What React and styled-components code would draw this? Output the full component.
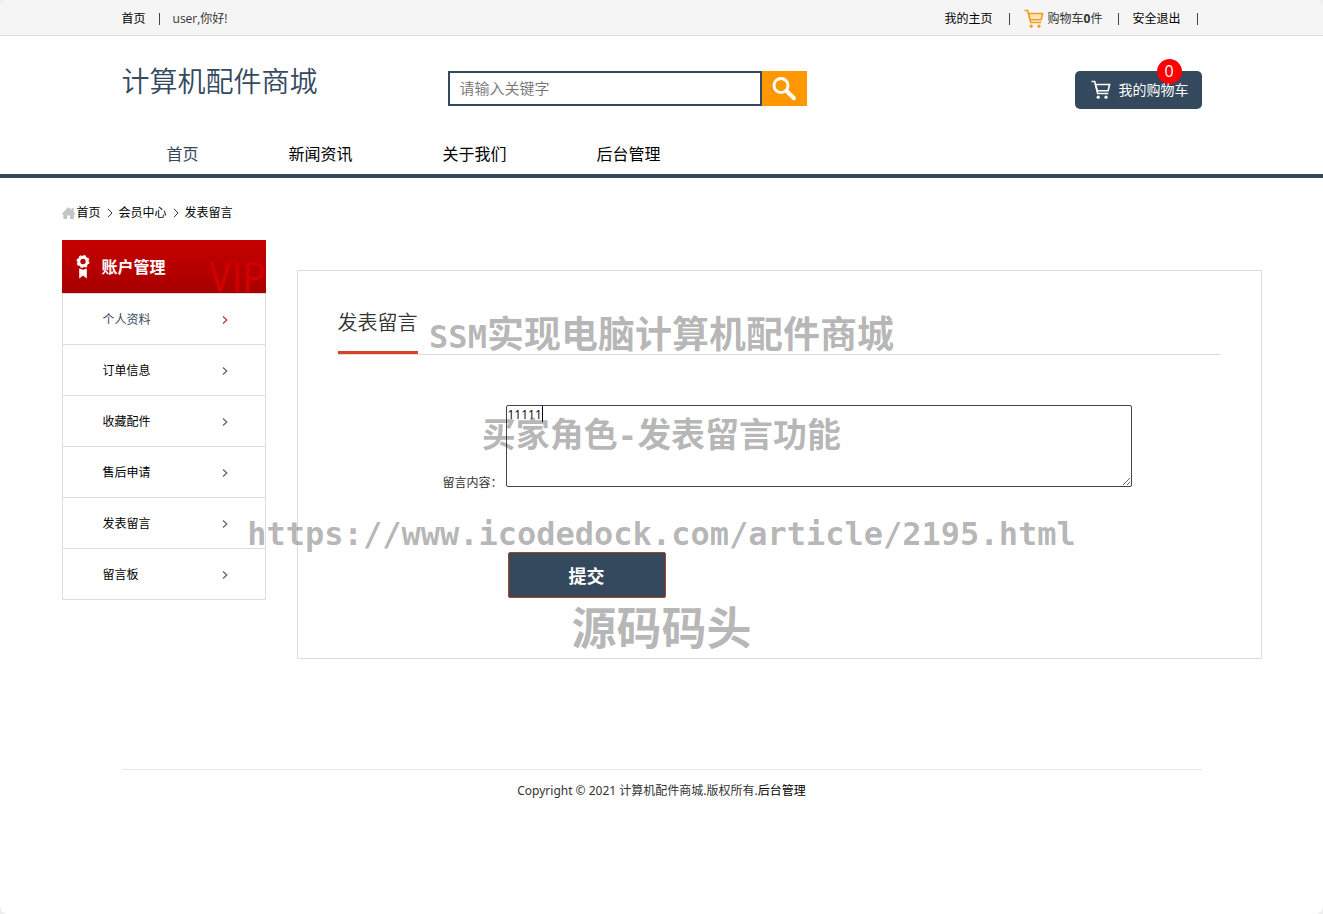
import { useState } from "react";
import styled, { createGlobalStyle } from "styled-components";

const NAV = ["首页", "新闻资讯", "关于我们", "后台管理"];
const MENU = ["个人资料", "订单信息", "收藏配件", "售后申请", "发表留言", "留言板"];
const CRUMBS = ["首页", "会员中心", "发表留言"];

const GlobalStyle = createGlobalStyle`
  * {
    box-sizing: border-box;
  }
  body {
    margin: 0;
    background: #eee;
    color: #333;
    font: 12px/20px "Open Sans", "Noto Sans CJK SC", sans-serif;
  }
  svg {
    display: block;
    flex: none;
  }
`;

const Page = styled.div`
  position: relative;
  min-height: 100vh;
  overflow: hidden;
  border-radius: 8px;
  background: #fff;
`;

const Link = styled.a`
  color: #000;
  text-decoration: none;
  white-space: nowrap;
  &:hover{
    color: #34495e;
  }
`;

const TopBar = styled.div`
  background: #f5f5f5;
  border-bottom: 1px solid #ddd;
`;

const TopInner = styled.div`
  display: flex;
  align-items: center;
  max-width: 1080px;
  height: 35px;
  margin: 0 auto;
  padding-top: 2px;
`;

const TopRight = styled.div`
  display: flex;
  align-items: center;
  margin-left: auto;
`;

const Divider = styled.span`
  width: 1px;
  height: 12px;
  background: #444;
  margin: 0 ${props => props.$after} 0 ${props => props.$before || "16px"};
`;

const CartLink = styled(Link)`
  display: flex;
  align-items: center;
  gap: 4px;
  color: #333;
`;

const Header = styled.header`
  display: flex;
  align-items: flex-start;
  max-width: 1080px;
  height: 98px;
  margin: 0 auto;
  padding-top: 35px;
`;

const Logo = styled.div`
  margin-right: 130px;
  color: #34495e;
  font-size: 28px;
  font-weight: 350;
  line-height: 20px;
  white-space: nowrap;
`;

const Search = styled.form`
  display: flex;
  width: 359px;
  height: 35px;
`;

const SearchInput = styled.input`
  flex: 1;
  min-width: 0;
  padding: 0 10px 2px;
  border: 2px solid #34495e;
  font-family: inherit;
  font-size: 15px;
  font-weight: 350;
  outline: none;
  &::placeholder {
    color: #757575;
  }
`;

const SearchButton = styled.button`
  display: flex;
  align-items: center;
  justify-content: center;
  width: 45px;
  padding: 0;
  border: none;
  background: #ff9800;
  cursor: pointer;
`;

const CartButton = styled.button`
  position: relative;
  display: flex;
  align-items: center;
  gap: 8px;
  height: 38px;
  margin-left: auto;
  padding: 0 13px 0 16px;
  border: none;
  border-radius: 5px;
  background: #34495e;
  color: #fff;
  font-family: inherit;
  font-size: 14px;
  cursor: pointer;
`;

const CartText = styled.span`
  position: relative;
  padding-bottom: 2px;
  white-space: nowrap;
`;

const Badge = styled.span`
  position: absolute;
  top: -12px;
  right: 20px;
  width: 25px;
  height: 25px;
  border-radius: 50%;
  background: #f00;
  font-size: 16px;
  line-height: 25px;
  text-align: center;
`;

const NavBar = styled.div`
  border-bottom: 4px solid #34495e;
`;

const Nav = styled.nav`
  display: flex;
  max-width: 1080px;
  margin: 0 auto;
`;

const NavLink = styled.a`
  padding: 0 45px;
  color: ${props => props.$active ? "#34495e" : "#000"};
  font-size: 16px;
  line-height: 40px;
  text-decoration: none;
`;

const Main = styled.main`
  max-width: 1200px;
  margin: 0 auto;
  padding-top: 25px;
`;

const Crumbs = styled.div`
  display: flex;
  align-items: center;
  gap: 2px;
`;

const Crumb = styled.span`
  display: flex;
  align-items: center;
  gap: 5px;
  svg {
    margin-left: 3px;
  }
`;

const Columns = styled.div`
  display: flex;
  align-items: flex-start;
  gap: 31px;
  margin-top: 17px;
`;

const Side = styled.aside`
  flex: none;
  width: 204px;
`;

const SideHead = styled.div`
  position: relative;
  display: flex;
  align-items: center;
  gap: 12px;
  height: 53px;
  padding-left: 14px;
  background: linear-gradient(#c60000, #a80000);
  color: #fff;
  font-size: 16px;
  font-weight: 700;
`;

// faint lettering behind the heading
const Vip = styled.span`
  position: absolute;
  right: 0;
  bottom: -7px;
  color: #d00000;
  font-family: "Roboto Condensed", "Open Sans Condensed", Roboto, sans-serif;
  font-size: 42px;
  font-weight: 400;
  line-height: 44px;
`;

const Menu = styled.ul`
  margin: 0;
  padding: 0;
  border: 1px solid #ddd;
  border-bottom: none;
  list-style: none;
`;

const MenuLink = styled.a`
  display: flex;
  align-items: center;
  justify-content: space-between;
  height: 51px;
  padding: 2px 36px 0 40px;
  border-bottom: 1px solid #ddd;
  color: ${props => props.$active ? "#34495e" : "#000"};
  text-decoration: none;
`;

const Panel = styled.section`
  flex: 1;
  min-width: 0;
  margin-top: 30px;
  padding: 40px 40px 60px;
  border: 1px solid #ddd;
`;

const TitleRow = styled.div`
  display: flex;
  border-bottom: 1px solid #ddd;
`;

const Title = styled.h2`
  margin: 0;
  padding-bottom: 16px;
  border-bottom: 3px solid #dd4228;
  font-size: 20px;
  font-weight: 350;
  line-height: 24px;
`;

const Field = styled.div`
  display: flex;
  align-items: flex-end;
  margin: 50px 89px 0 105px;
`;

const Label = styled.label`
  flex: none;
  width: 63px;
  line-height: 8px;
  white-space: nowrap;
`;

const AreaWrap = styled.div`
  position: relative;
  flex: 1;
`;

const Area = styled.textarea`
  display: block;
  width: 100%;
  height: 82px;
  padding: 0 1px;
  border: 1px solid #444;
  border-radius: 2px;
  color: #000;
  font-family: inherit;
  font-size: 12px;
  line-height: 17px;
  outline: none;
`;

const Caret = styled.span`
  position: absolute;
  top: 1px;
  left: 36px;
  width: 1px;
  height: 16px;
  background: #000;
`;

const Submit = styled.button`
  display: block;
  width: 158px;
  height: 46px;
  margin: 65px 0 0 170px;
  border: 1px solid #a5461f;
  border-radius: 2px;
  background: #34495e;
  color: #fff;
  font-family: inherit;
  font-size: 18px;
  font-weight: 700;
  cursor: pointer;
`;

const Footer = styled.footer`
  max-width: 1080px;
  margin: 110px auto 0;
  padding: 11px 0;
  border-top: 1px solid #e6e6e6;
  font-family: "Noto Sans", "Noto Sans CJK SC", sans-serif;
  text-align: center;
`;

const Watermark = styled.div`
  position: absolute;
  top: 284px;
  left: 0;
  right: 0;
  display: flex;
  flex-direction: column;
  align-items: center;
  color: rgba(0, 0, 0, .3);
  font-weight: 700;
  pointer-events: none;
`;

const Mark = styled.div`
  font-size: ${props => props.$size};
  line-height: ${props => props.$line || "100px"};
  white-space: nowrap;
`;

const MarkLatin = styled.span`
  font-family: "DejaVu Sans Mono", monospace;
  font-size: 32px;
  line-height: 32px;
`;

const MarkUrl = styled(Mark)`
  font-family: "DejaVu Sans Mono", monospace;
`;

function CartIcon({ color, fill = "none" }) {
  return (
    <svg width="20" height="20" viewBox="0 0 20 20" fill="none" stroke={color} strokeWidth="1.6">
      <path d="M0.5 1.5h3.2l3 12h10.6" />
      <path d="M4.6 4.5h14l-1.5 6.3H6.2z" fill={fill} />
      <circle cx="7.2" cy="17.2" r="1.6" fill={color} stroke="none" />
      <circle cx="15" cy="17.2" r="1.6" fill={color} stroke="none" />
    </svg>
  );
}

function Chevron({ color, thin = false }) {
  return (
    <svg width="8" height="10" viewBox="0 0 8 10" fill="none" stroke={color} strokeWidth={thin ? 1 : 1.3}>
      <path d={thin ? "M2 0.8l4 4.2L2 9.2" : "M2 1.5l3.8 3.5L2 8.5"} />
    </svg>
  );
}

export default function App() {
  const [content, setContent] = useState("11111");

  return (
    <Page>
      <GlobalStyle />
      <TopBar>
        <TopInner>
          <Link href="#">首页</Link>
          <Divider $before="13px" $after="13px" />
          <span>user,你好!</span>
          <TopRight>
            <Link href="#">我的主页</Link>
            <Divider $after="14px" />
            <CartLink href="#">
              <CartIcon color="#f39c1f" fill="#fde3b5" />
              <span>购物车<b>0</b>件</span>
            </CartLink>
            <Divider $after="13px" />
            <Link href="#">安全退出</Link>
            <Divider $after="4px" />
          </TopRight>
        </TopInner>
      </TopBar>

      <Header>
        <Logo>计算机配件商城</Logo>
        <Search onSubmit={e => e.preventDefault()}>
          <SearchInput type="text" placeholder="请输入关键字" aria-label="请输入关键字" />
          <SearchButton type="submit" aria-label="搜索">
            <svg width="26" height="26" viewBox="0 0 26 26" fill="none" stroke="#fff">
              <circle cx="10" cy="9.5" r="7" strokeWidth="3" />
              <path d="M15.4 14.8l7.6 7.4" strokeWidth="4" strokeLinecap="round" />
            </svg>
          </SearchButton>
        </Search>
        <CartButton type="button">
          <Badge>0</Badge>
          <CartIcon color="#fff" />
          <CartText>我的购物车</CartText>
        </CartButton>
      </Header>

      <NavBar>
        <Nav>
          {NAV.map((item, i) => (
            <NavLink key={item} href="#" $active={i === 0}>{item}</NavLink>
          ))}
        </Nav>
      </NavBar>

      <Main>
        <Crumbs>
          <svg width="13" height="13" viewBox="0 0 13 13" fill="#c4c4c4">
            <path d="M6.5 0L9.6 3V1h2v4l1.4 1.6v0.9h-1.2V12H8V8.5H5.2V12H1.4V7.5H0V6.6z" />
          </svg>
          {CRUMBS.map((item, i) => (
            <Crumb key={item}>
              {i > 0 && <Chevron color="#333" thin />}
              <Link href="#">{item}</Link>
            </Crumb>
          ))}
        </Crumbs>

        <Columns>
          <Side>
            <SideHead>
              <svg width="14" height="24" viewBox="0 0 14 24" fill="#fff">
                <circle cx="7" cy="6.5" r="4.2" fill="none" stroke="#fff" strokeWidth="3" />
                <circle cx="7" cy="6.5" r="5.9" fill="none" stroke="#fff" strokeWidth="1.2" strokeDasharray="2.6 2" />
                <path d="M3.2 13.6l3.8 1.2 3.8-1.2V23.5L7 20.4 3.2 23.5z" />
              </svg>
              <span>账户管理</span>
              <Vip aria-hidden="true">VIP</Vip>
            </SideHead>
            <Menu>
              {MENU.map((item, i) => (
                <li key={item}>
                  <MenuLink href="#" $active={i === 0}>
                    {item}
                    <Chevron color={i === 0 ? "#c0392b" : "#666"} />
                  </MenuLink>
                </li>
              ))}
            </Menu>
          </Side>

          <Panel>
            <TitleRow>
              <Title>发表留言</Title>
            </TitleRow>
            <form onSubmit={e => e.preventDefault()}>
              <Field>
                <Label htmlFor="content">留言内容：</Label>
                <AreaWrap>
                  <Area id="content" value={content} onChange={e => setContent(e.target.value)} />
                  <Caret />
                </AreaWrap>
              </Field>
              <Submit type="submit">提交</Submit>
            </form>
          </Panel>
        </Columns>
      </Main>

      <Footer>
        Copyright © 2021 计算机配件商城.版权所有.<Link href="#">后台管理</Link>
      </Footer>

      <Watermark>
        <Mark $size="37px"><MarkLatin>SSM</MarkLatin>实现电脑计算机配件商城</Mark>
        <Mark $size="34px">买家角色<MarkLatin>-</MarkLatin>发表留言功能</Mark>
        <MarkUrl $size="32px">https://www.icodedock.com/article/2195.html</MarkUrl>
        <Mark $size="45px" $line="88px">源码码头</Mark>
      </Watermark>
    </Page>
  );
}
